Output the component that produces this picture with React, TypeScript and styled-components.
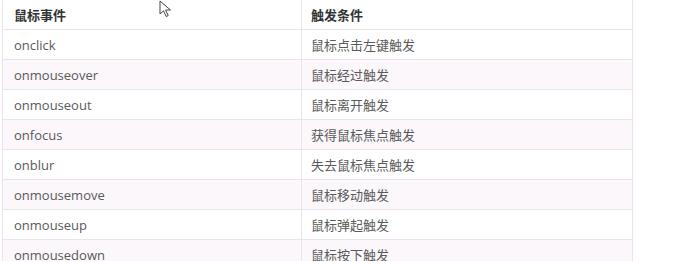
import React from 'react'
import styled, { createGlobalStyle } from 'styled-components'

const GlobalStyle = createGlobalStyle`
  html, body {
    margin: 0;
    padding: 0;
    background: #fff;
  }
  body {
    font-family: 'Open Sans', 'Noto Sans CJK SC', sans-serif;
  }
`

const Page = styled.div`
  position: relative;
  width: 678px;
  height: 262px;
  overflow: hidden;
  padding-left: 2px;
  margin-top: -1px;
  box-sizing: border-box;
`

const Table = styled.table`
  width: 631px;
  border-collapse: collapse;
  table-layout: fixed;
  font-size: 13px;
`

const HeadCell = styled.th`
  height: 29px;
  padding: 0 0 0 11px;
  border: 1px solid #ebe4ec;
  text-align: left;
  font-weight: 700;
  color: #333;
  font-family: 'Noto Sans CJK SC', sans-serif;

  &:nth-child(2) {
    padding-left: 9px;
  }
`

const Row = styled.tr<{ $striped: boolean }>`
  background: ${(p) => (p.$striped ? '#fbf7fb' : '#fff')};
`

const Cell = styled.td`
  height: 29px;
  padding: 0 0 0 11px;
  border: 1px solid #ebe4ec;
  color: #5a5a5a;
  white-space: nowrap;

  &:nth-child(2) {
    padding-left: 9px;
  }
`

const Cursor = styled.svg`
  position: absolute;
  left: 159px;
  top: 1px;
`

const events: [string, string][] = [
  ['onclick', '鼠标点击左键触发'],
  ['onmouseover', '鼠标经过触发'],
  ['onmouseout', '鼠标离开触发'],
  ['onfocus', '获得鼠标焦点触发'],
  ['onblur', '失去鼠标焦点触发'],
  ['onmousemove', '鼠标移动触发'],
  ['onmouseup', '鼠标弹起触发'],
  ['onmousedown', '鼠标按下触发'],
]

export default function App() {
  return (
    <Page>
      <GlobalStyle />
      <Table>
        <colgroup>
          <col style={{ width: 299 }} />
          <col />
        </colgroup>
        <thead>
          <tr>
            <HeadCell>鼠标事件</HeadCell>
            <HeadCell>触发条件</HeadCell>
          </tr>
        </thead>
        <tbody>
          {events.map(([name, desc], i) => (
            <Row key={name} $striped={i % 2 === 1}>
              <Cell>{name}</Cell>
              <Cell>{desc}</Cell>
            </Row>
          ))}
        </tbody>
      </Table>
      <Cursor width="14" height="18" viewBox="0 0 14 18">
        <path
          d="M1 1 L1 14 L4.5 10.8 L7.2 16.5 L9.2 15.6 L6.6 10 L11.5 10 Z"
          fill="#fff"
          stroke="#444"
          strokeWidth="1"
          strokeLinejoin="round"
        />
      </Cursor>
    </Page>
  )
}
